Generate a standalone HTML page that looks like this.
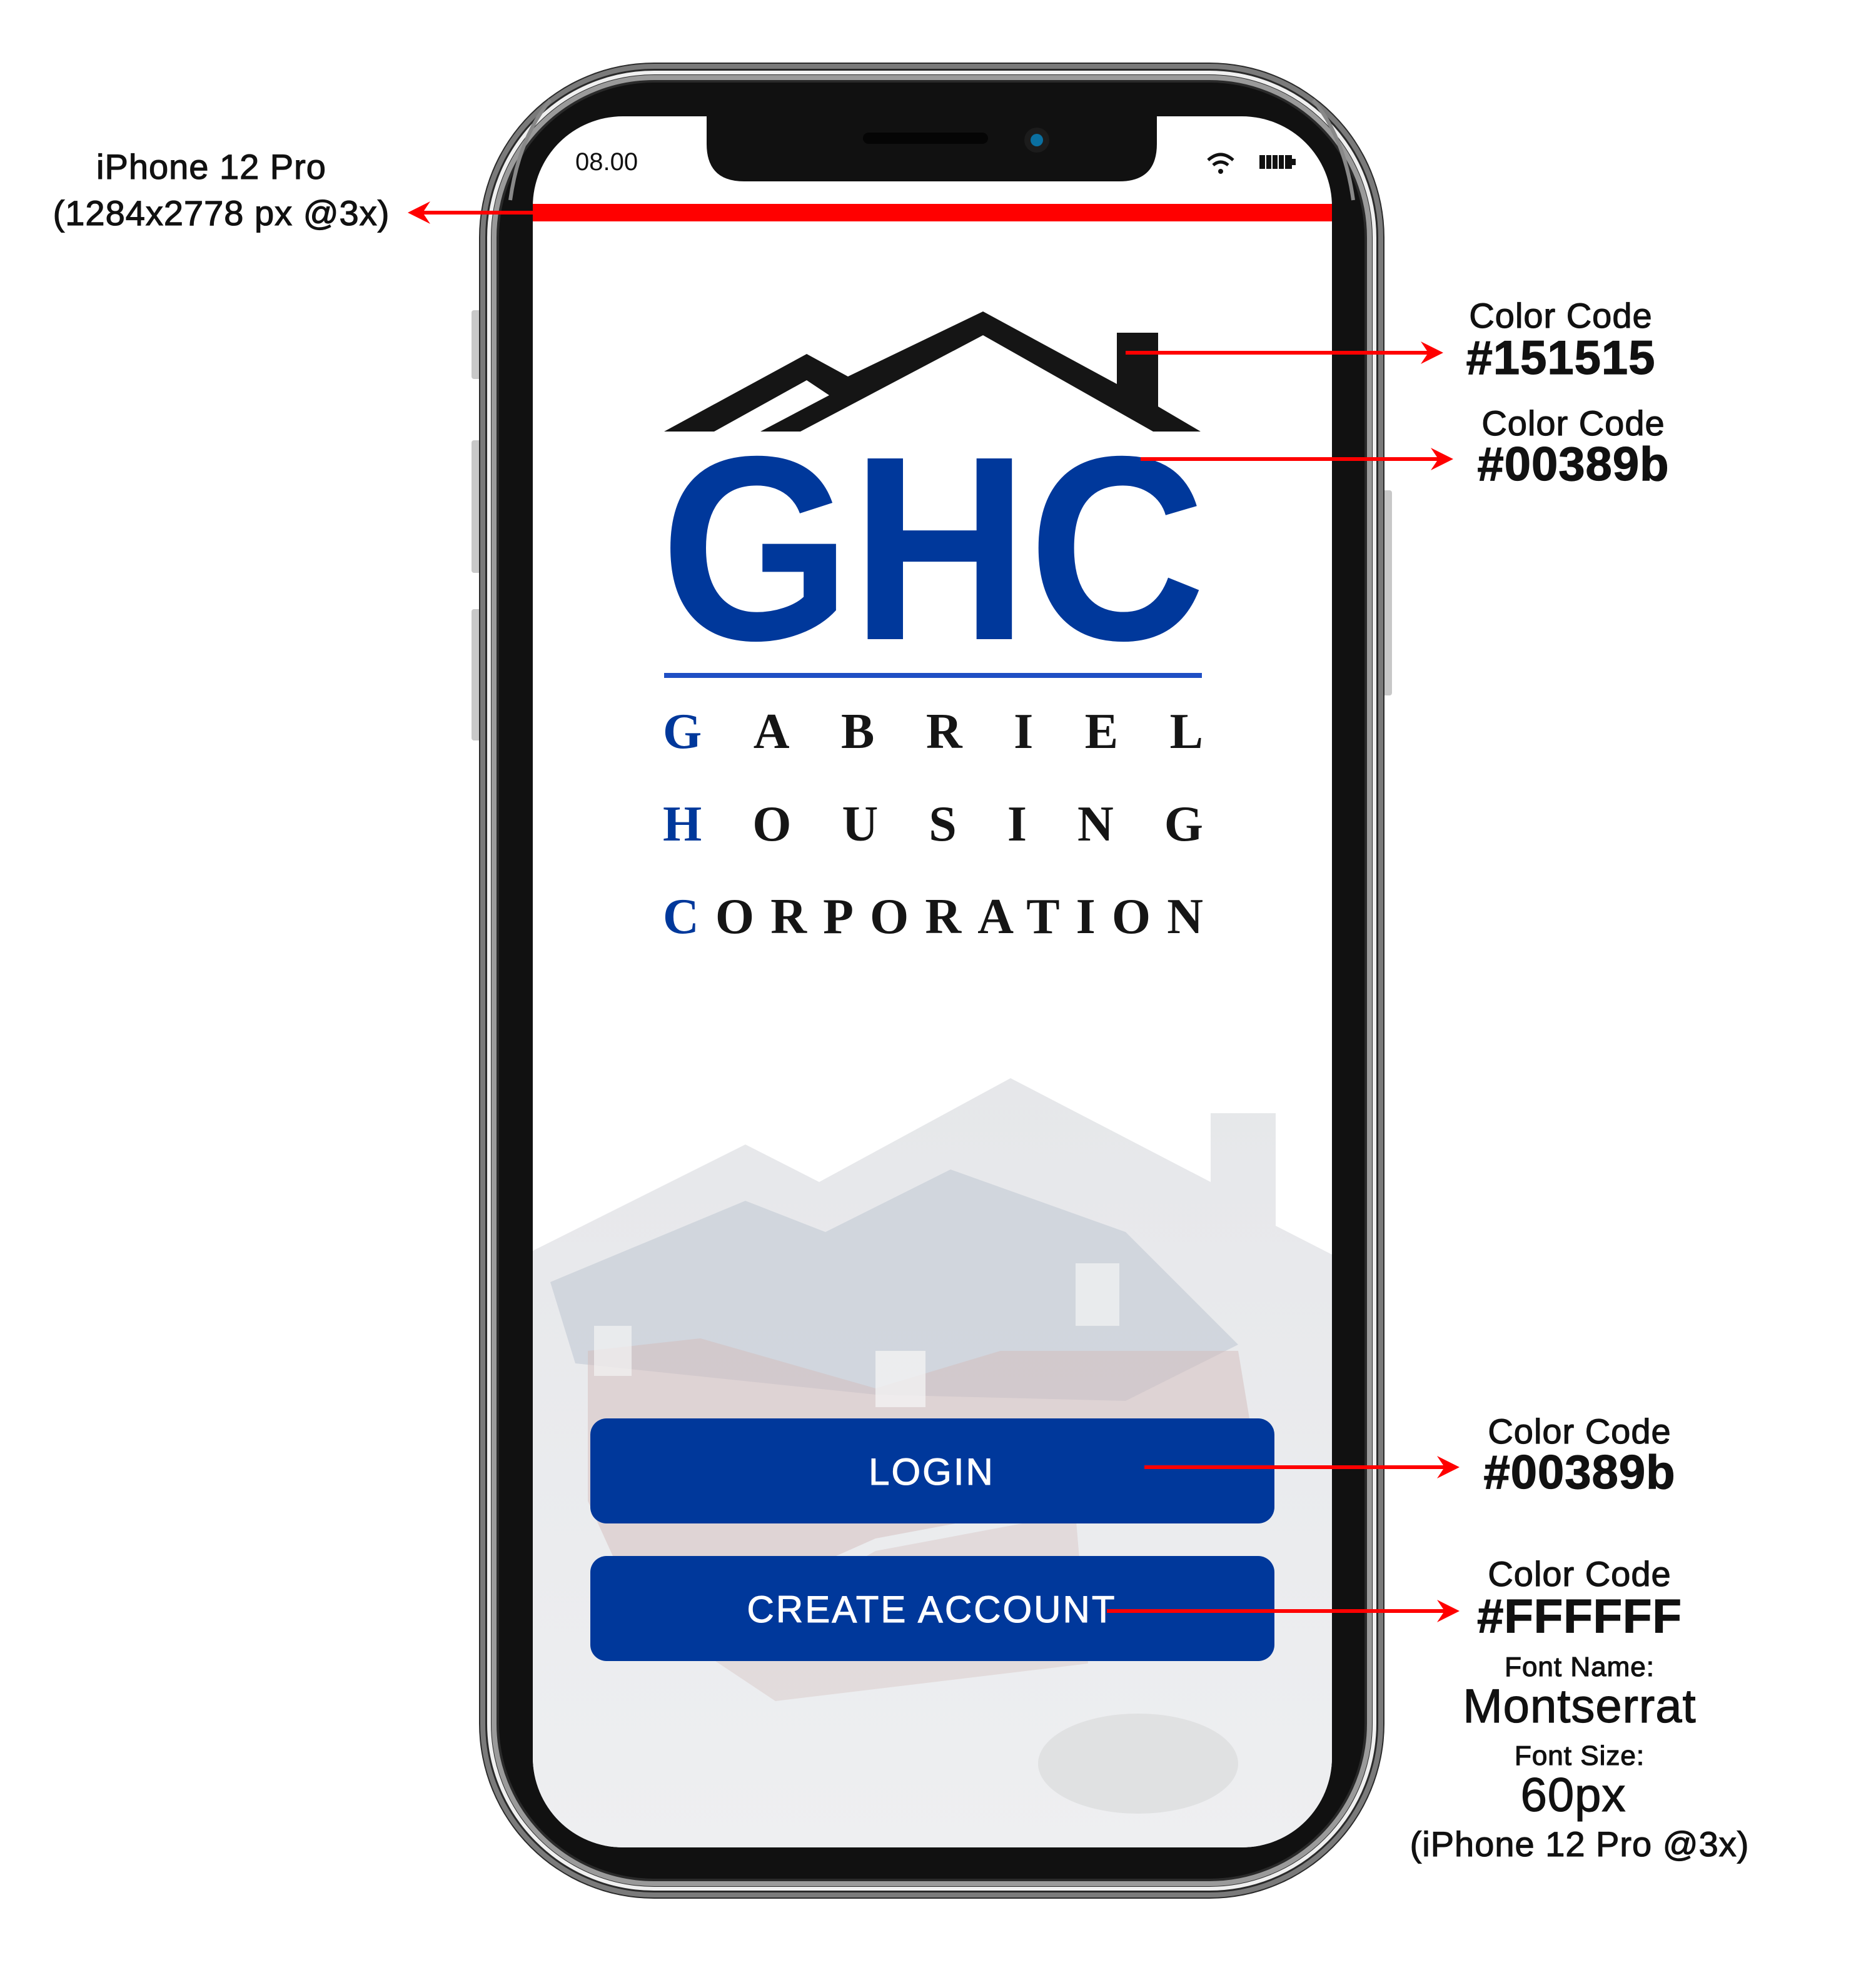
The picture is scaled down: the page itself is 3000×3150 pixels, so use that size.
<!DOCTYPE html>
<html><head><meta charset="utf-8"><style>
html,body{margin:0;padding:0;background:#fff;width:3000px;height:3150px;overflow:hidden}
svg{display:block}
text{font-family:"Liberation Sans",sans-serif}
.serif{font-family:"Liberation Serif",serif;font-weight:bold}
.ann text{stroke:#111;stroke-width:0.6;letter-spacing:0.5px}
</style></head><body>
<svg width="3000" height="3150" viewBox="0 0 1500 1575" xmlns="http://www.w3.org/2000/svg">
<defs>
<linearGradient id="bg" x1="0" y1="0" x2="0" y2="1"><stop offset="0" stop-color="#e6e7ea"/><stop offset="1" stop-color="#eeeff1"/></linearGradient>
<clipPath id="scr"><rect x="426" y="93" width="639" height="1384" rx="72"/></clipPath>
</defs>
<!-- side buttons -->
<rect x="377" y="248" width="8" height="55" rx="2" fill="#c8c8c8"/>
<rect x="377" y="352" width="8" height="106" rx="2" fill="#c8c8c8"/>
<rect x="377" y="487" width="8" height="105" rx="2" fill="#c8c8c8"/>
<rect x="1105" y="392" width="8" height="164" rx="2" fill="#c8c8c8"/>
<!-- phone body -->
<rect x="383" y="50" width="724" height="1468" rx="140" fill="#2a2a2a"/>
<rect x="386" y="53" width="718" height="1462" rx="137" fill="none" stroke="#7a7a7a" stroke-width="4"/>
<rect x="391" y="58" width="708" height="1452" rx="132" fill="none" stroke="#f0f0f0" stroke-width="3"/>
<rect x="395" y="62" width="700" height="1444" rx="128" fill="none" stroke="#9a9a9a" stroke-width="4"/>
<rect x="399" y="66" width="692" height="1436" rx="124" fill="#111"/>
<path d="M440,80 Q415,110 408,160" fill="none" stroke="#888" stroke-width="3"/>
<path d="M1050,80 Q1075,110 1082,160" fill="none" stroke="#888" stroke-width="3"/>
<!-- screen -->
<rect x="426" y="93" width="639" height="1384" rx="72" fill="#fff"/>
<g clip-path="url(#scr)">
  <polygon points="426,1000 596,915 655,945 808,862 968,945 968,890 1020,890 1020,980 1065,1003 1065,1480 426,1480" fill="url(#bg)"/>
  <polygon points="440,1025 596,960 660,985 760,935 900,985 990,1075 900,1120 700,1115 460,1090" fill="#cdd2da" opacity="0.85"/>
  <polygon points="470,1080 560,1070 700,1110 800,1080 990,1080 1000,1140 860,1200 700,1230 520,1310 470,1200" fill="#d4bcbb" opacity="0.5"/>
  <polygon points="560,1320 700,1240 860,1210 870,1330 620,1360" fill="#d8c5c4" opacity="0.45"/>
  <rect x="700" y="1080" width="40" height="45" fill="#f3f3f3" opacity="0.8"/>
  <rect x="860" y="1010" width="35" height="50" fill="#f3f3f3" opacity="0.7"/>
  <rect x="475" y="1060" width="30" height="40" fill="#f3f3f3" opacity="0.7"/>
  <ellipse cx="910" cy="1410" rx="80" ry="40" fill="#dcdddf" opacity="0.8"/>
</g>
<!-- notch -->
<path d="M565,93 H925 V115 Q925,145 895,145 H595 Q565,145 565,115 Z" fill="#111"/>
<rect x="690" y="106" width="100" height="9" rx="4.5" fill="#050505"/>
<circle cx="829" cy="112" r="10" fill="#1c1c1c"/>
<circle cx="829" cy="112" r="5" fill="#0a6fa0"/>
<!-- status bar -->
<text x="460" y="136" font-size="20" fill="#111">08.00</text>
<path d="M966,128 Q976,119 986,128" fill="none" stroke="#111" stroke-width="2.5"/>
<path d="M970,132 Q976,127 982,132" fill="none" stroke="#111" stroke-width="2.5"/>
<circle cx="976" cy="137" r="2" fill="#111"/>
<rect x="1007" y="124" width="26" height="11" fill="#111"/>
<rect x="1033" y="127" width="3" height="5" fill="#111"/>
<g stroke="#fff" stroke-width="1"><line x1="1012" y1="124" x2="1012" y2="135"/><line x1="1017" y1="124" x2="1017" y2="135"/><line x1="1022" y1="124" x2="1022" y2="135"/><line x1="1027" y1="124" x2="1027" y2="135"/></g>
<!-- red bar -->
<rect x="426" y="163" width="639" height="14" fill="#ff0000"/>
<!-- logo roof -->
<polygon points="531,345 645,283 678,301 786,249 893,307 893,266 926,266 926,325 960,345 922,345 786,268 640,345 608,345 663,316 645,304 571,345" fill="#151515"/>
<!-- GHC -->
<text x="528" y="511" font-size="210" font-weight="bold" fill="#00389b" textLength="436" lengthAdjust="spacingAndGlyphs">GHC</text>
<rect x="531" y="538" width="430" height="4" fill="#1f4fc4"/>
<text class="serif" x="530" y="598" font-size="40" fill="#151515" textLength="432" lengthAdjust="spacing"><tspan fill="#00389b">G</tspan>ABRIEL</text>
<text class="serif" x="530" y="672" font-size="40" fill="#151515" textLength="432" lengthAdjust="spacing"><tspan fill="#00389b">H</tspan>OUSING</text>
<text class="serif" x="530" y="746" font-size="40" fill="#151515" textLength="432" lengthAdjust="spacing"><tspan fill="#00389b">C</tspan>ORPORATION</text>
<!-- buttons -->
<rect x="472" y="1134" width="547" height="84" rx="13" fill="#00389b"/>
<text x="745" y="1187" font-size="30" fill="#fff" stroke="#fff" stroke-width="0.5" text-anchor="middle" letter-spacing="1.5">LOGIN</text>
<rect x="472" y="1244" width="547" height="84" rx="13" fill="#00389b"/>
<text x="745" y="1297" font-size="30" fill="#fff" stroke="#fff" stroke-width="0.5" text-anchor="middle" letter-spacing="1.5">CREATE ACCOUNT</text>
<!-- annotations -->
<g fill="#ff0000" stroke="#ff0000" stroke-width="3">
  <line x1="336" y1="170" x2="426" y2="170"/>
  <polygon points="326,170 344,161 338,170 344,179" stroke="none"/>
  <line x1="900" y1="282" x2="1142" y2="282"/>
  <polygon points="1154,282 1136,273 1142,282 1136,291" stroke="none"/>
  <line x1="912" y1="367" x2="1150" y2="367"/>
  <polygon points="1162,367 1144,358 1150,367 1144,376" stroke="none"/>
  <line x1="915" y1="1173" x2="1155" y2="1173"/>
  <polygon points="1167,1173 1149,1164 1155,1173 1149,1182" stroke="none"/>
  <line x1="885" y1="1288" x2="1155" y2="1288"/>
  <polygon points="1167,1288 1149,1279 1155,1288 1149,1297" stroke="none"/>
</g>
<g class="ann" fill="#111" text-anchor="middle">
  <text x="169" y="143" font-size="28">iPhone 12 Pro</text>
  <text x="177" y="180" font-size="28">(1284x2778 px @3x)</text>
  <text x="1248" y="262" font-size="28">Color Code</text>
  <text x="1248" y="299" font-size="38" font-weight="bold">#151515</text>
  <text x="1258" y="348" font-size="28">Color Code</text>
  <text x="1258" y="384" font-size="38" font-weight="bold">#00389b</text>
  <text x="1263" y="1154" font-size="28">Color Code</text>
  <text x="1263" y="1190" font-size="38" font-weight="bold">#00389b</text>
  <text x="1263" y="1268" font-size="28">Color Code</text>
  <text x="1263" y="1305" font-size="38" font-weight="bold">#FFFFFF</text>
  <text x="1263" y="1340" font-size="22">Font Name:</text>
  <text x="1263" y="1377" font-size="38">Montserrat</text>
  <text x="1263" y="1411" font-size="22">Font Size:</text>
  <text x="1258" y="1448" font-size="38">60px</text>
  <text x="1263" y="1484" font-size="28">(iPhone 12 Pro @3x)</text>
</g>
</svg>
</body></html>
